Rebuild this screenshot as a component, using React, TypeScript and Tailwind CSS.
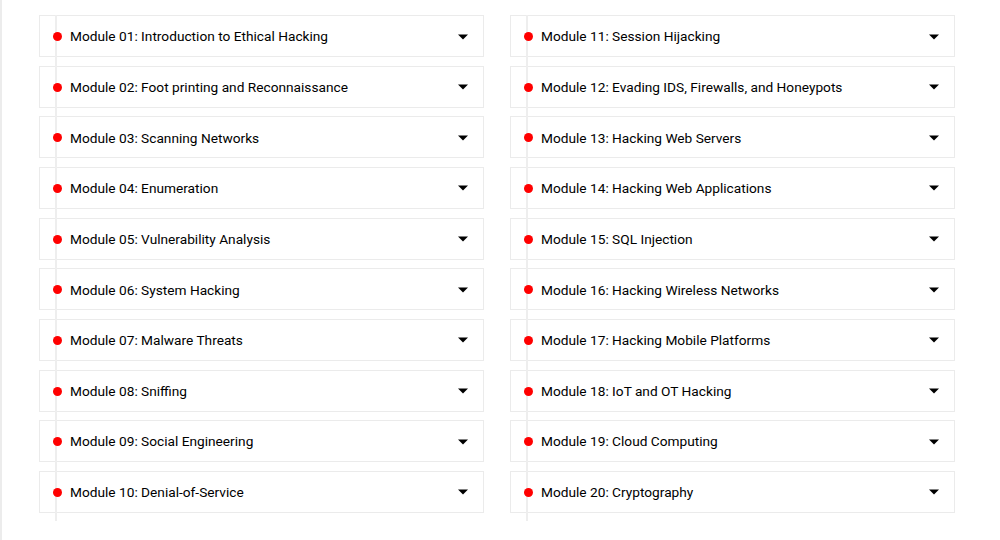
import { useState } from 'react';

const left = [
  'Module 01: Introduction to Ethical Hacking',
  'Module 02: Foot printing and Reconnaissance',
  'Module 03: Scanning Networks',
  'Module 04: Enumeration',
  'Module 05: Vulnerability Analysis',
  'Module 06: System Hacking',
  'Module 07: Malware Threats',
  'Module 08: Sniffing',
  'Module 09: Social Engineering',
  'Module 10: Denial-of-Service',
];

const right = [
  'Module 11: Session Hijacking',
  'Module 12: Evading IDS, Firewalls, and Honeypots',
  'Module 13: Hacking Web Servers',
  'Module 14: Hacking Web Applications',
  'Module 15: SQL Injection',
  'Module 16: Hacking Wireless Networks',
  'Module 17: Hacking Mobile Platforms',
  'Module 18: IoT and OT Hacking',
  'Module 19: Cloud Computing',
  'Module 20: Cryptography',
];

const ModuleItem = ({ title }: { title: string }) => {
  const [open, setOpen] = useState(false);
  return (
    <li
      className="flex h-[42px] items-center justify-between border border-[#ebebeb] bg-white pl-[13px] pr-[15px] pt-[1px] cursor-pointer"
      onClick={() => setOpen(!open)}
    >
      <div className="flex items-center gap-[8px]">
        <span className="relative z-20 block h-[9px] w-[9px] rounded-full bg-[#ff0000]" />
        <span className="text-[13.7px] text-black">{title}</span>
      </div>
      <svg width="10" height="6" viewBox="0 0 10 6" className={open ? 'rotate-180' : ''}>
        <path d="M0 0.5 L10 0.5 L5 5.5 Z" fill="#000" />
      </svg>
    </li>
  );
};

const ModuleColumn = ({ items }: { items: string[] }) => (
  <div className="relative w-[445px] pb-[8px]">
    <ul className="flex flex-col gap-[8.67px]">
      {items.map((t) => (
        <ModuleItem key={t} title={t} />
      ))}
    </ul>
    <div className="absolute left-[16px] top-0 bottom-0 z-10 w-[2px] bg-[#eeeeee]" />
  </div>
);

export default function App() {
  return (
    <div
      className="h-[540px] w-[1000px] border-l-2 border-[#ececec] bg-white pl-[37px] pt-[15px]"
      style={{ fontFamily: 'Roboto, "Liberation Sans", sans-serif' }}
    >
      <div className="flex gap-[26px]">
        <ModuleColumn items={left} />
        <ModuleColumn items={right} />
      </div>
    </div>
  );
}
